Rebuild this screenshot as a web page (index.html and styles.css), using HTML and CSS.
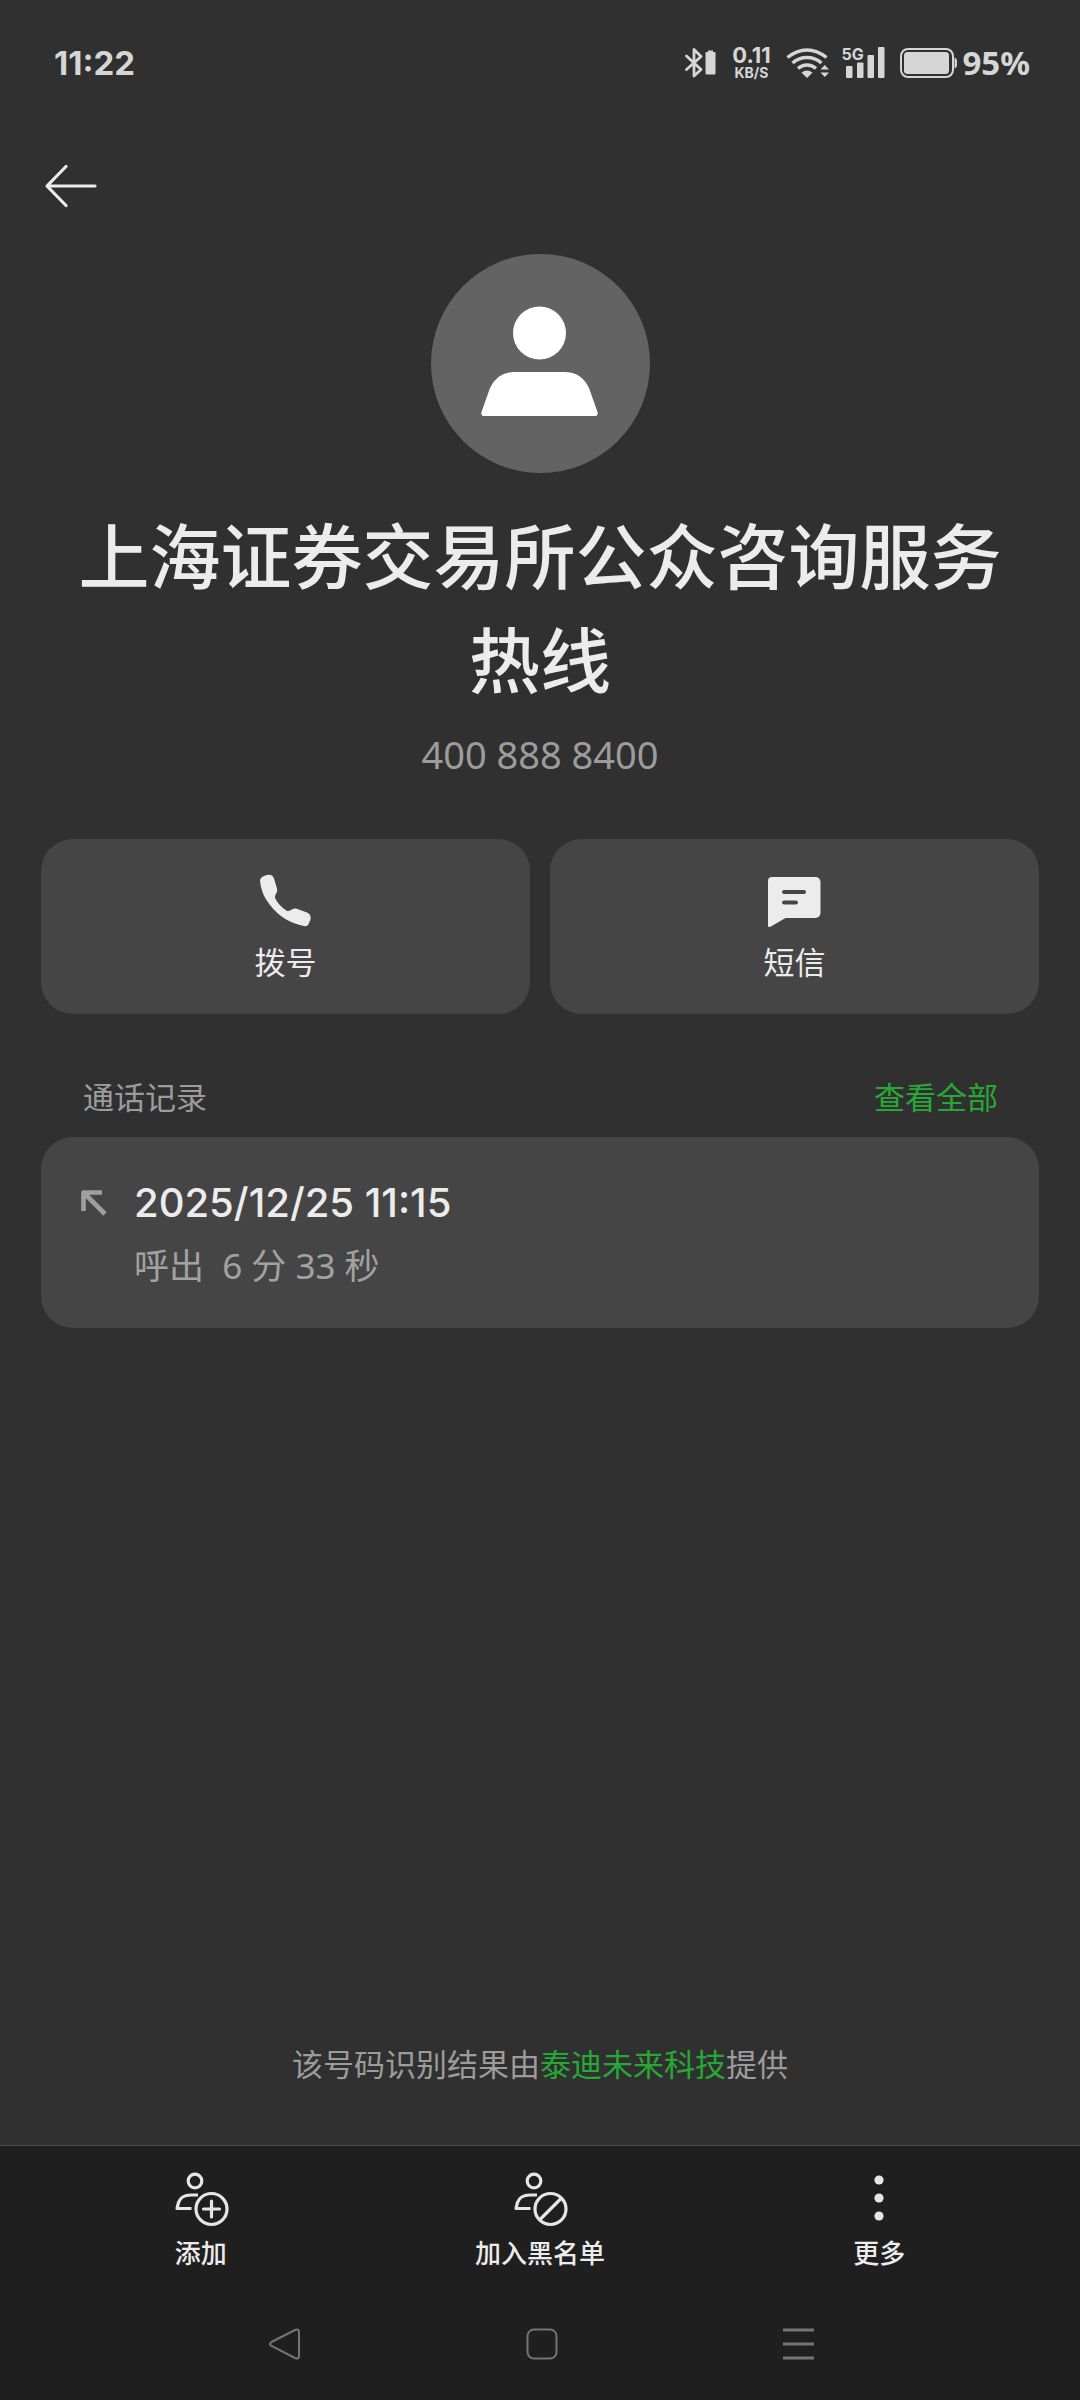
FILE: index.html
```html
<!DOCTYPE html>
<html lang="zh-CN">
<head>
<meta charset="utf-8">
<meta name="viewport" content="width=device-width, initial-scale=1">
<title>上海证券交易所公众咨询服务热线</title>
<link rel="stylesheet" href="styles.css">
</head>
<body>
<div class="status">
  <time class="clock">11:22</time>
  <div class="indicators">
    <svg width="32" height="32" viewBox="0 0 32 32" aria-hidden="true">
      <path d="M1.5 9 16 22.500 9 29V2.500L16 9.500 1.500 22.500" fill="none" stroke="#d6d6d6" stroke-width="2.800" stroke-linejoin="round" stroke-linecap="round"/>
      <path d="M23 3.500h5V5h1.500a1 1 0 0 1 1 1v20a1.500 1.500 0 0 1-1.500 1.500h-7a1.500 1.500 0 0 1-1.500-1.500V6a1 1 0 0 1 1-1H23z" fill="#d6d6d6"/>
    </svg>
    <div class="speed"><span class="rate">0.11</span><span class="unit">KB/S</span></div>
    <svg width="44" height="32" viewBox="0 0 44 32" aria-hidden="true">
      <g fill="none" stroke="#d6d6d6" stroke-width="3.400">
        <path d="M1.500 10.500Q11 3 21 3t19.500 7.500"/>
        <path d="M6.500 16Q13 10.500 21 10.500T35.500 16"/>
        <path d="M12 21.500q4-3.500 9-3.500t9 3.500"/>
      </g>
      <path d="M15.500 25.500q5.500-4 11 0L21 31zM34.500 22.500h8.500l-4.200-4.500zM34.500 25.500h8.500l-4.200 4.500z" fill="#d6d6d6"/>
    </svg>
    <div class="signal">
      <span class="network">5G</span>
      <svg width="40" height="32" viewBox="0 0 40 32" aria-hidden="true">
        <g fill="#d6d6d6"><rect y="19" width="6.500" height="12" rx="1"/><rect x="11" y="15.500" width="6.500" height="15.500" rx="1"/><rect x="21.500" y="8" width="6.500" height="23" rx="1"/><rect x="32" width="6.500" height="31" rx="1"/></g>
      </svg>
    </div>
    <svg width="58" height="32" viewBox="0 0 58 32" aria-hidden="true">
      <rect x="1" y="2" width="52" height="28" rx="7" fill="none" stroke="#d6d6d6" stroke-width="2"/>
      <rect x="4" y="5" width="45" height="22" rx="3.500" fill="#d6d6d6"/>
      <path d="M54.500 10.500q2.500 1 2.500 3v5q0 2-2.500 3z" fill="#d6d6d6"/>
    </svg>
    <span class="percent">95%</span>
  </div>
</div>

<header class="topbar">
  <button class="back" type="button" aria-label="返回">
    <svg width="54" height="46" viewBox="0 0 54 46" aria-hidden="true"><path d="M22 3.500 3 23l19 19.500M3 23h48" fill="none" stroke="#ececec" stroke-width="3.200" stroke-linecap="round" stroke-linejoin="round"/></svg>
  </button>
</header>

<main class="content">
  <section class="profile">
    <div class="avatar">
      <svg width="120" height="120" viewBox="0 -4 120 120" aria-hidden="true"><circle cx="59.500" cy="25" r="26.500" fill="#fff"/><path d="M34.500 64h50q17 0 24.500 16l8.500 24q1 4-3 4H4.500q-4 0-3-4l8.500-24Q17.500 64 34.500 64z" fill="#fff"/></svg>
    </div>
    <h1 class="name">上海证券交易所公众咨询服务热线</h1>
    <p class="number">400 888 8400</p>
  </section>

  <div class="actions">
    <button class="action" type="button">
      <svg width="54" height="54" viewBox="0 0 54 54" aria-hidden="true"><path d="M1 8Q1 5 4 3.500L7.500 2q6-1.500 7.500 3.500l3 10q1 3-1 5.500-1.500 1.500-1 4Q20 33 28 38q3 0 4-1 2-2 5-1.500l11 4q4.500 2 3.500 7l-1.500 3.500Q48.500 54 45 53 24 49 11 32 2 21 1 8z" fill="#ececec"/></svg>
      <span>拨号</span>
    </button>
    <button class="action" type="button">
      <svg width="54" height="54" viewBox="0 0 54 54" aria-hidden="true"><path d="M4 4h43.500a5 5 0 0 1 5 5v31a5 5 0 0 1-5 5h-30L2 54Q0 54.500 0 52.500V8a4 4 0 0 1 4-4z" fill="#ececec"/><path d="M16 19h20M16 29.500h12" stroke="#454545" stroke-width="4" stroke-linecap="round"/></svg>
      <span>短信</span>
    </button>
  </div>

  <section class="history">
    <div class="history-head">
      <h2 class="history-title">通话记录</h2>
      <a class="link" href="#all">查看全部</a>
    </div>
    <div class="card">
      <svg class="outgoing" width="28" height="28" viewBox="0 0 28 28" aria-hidden="true"><path d="M23 3.500H4.500V22M5 4l21 21" fill="none" stroke="#9f9f9f" stroke-width="4.600" stroke-linejoin="round"/></svg>
      <div class="call">
        <time class="call-time">2025/12/25 11:15</time>
        <span class="call-info">呼出&nbsp; 6 分 33 秒</span>
      </div>
    </div>
  </section>

  <p class="source">该号码识别结果由<a class="link" href="#provider">泰迪未来科技</a>提供</p>
</main>

<footer class="bottom">
  <div class="toolbar">
    <button class="tool" type="button">
      <svg width="56" height="56" viewBox="0 0 56 56" aria-hidden="true"><g fill="none" stroke="#e6e6e6" stroke-width="3.200"><circle cx="22" cy="9" r="6.800"/><path d="M25 23H18Q8 23 5.500 30.500L4 36.500H18.500" stroke-linejoin="round"/><circle cx="38.500" cy="37" r="15.500"/><path d="M30.500 37h16M38.500 29v16" stroke-linecap="round"/></g></svg>
      <span>添加</span>
    </button>
    <button class="tool" type="button">
      <svg width="56" height="56" viewBox="0 0 56 56" aria-hidden="true"><g fill="none" stroke="#e6e6e6" stroke-width="3.200"><circle cx="22" cy="9" r="6.800"/><path d="M25 23H18Q8 23 5.500 30.500L4 36.500H18.500" stroke-linejoin="round"/><circle cx="38.500" cy="37" r="15.500"/><path d="M27.500 48l22-22"/></g></svg>
      <span>加入黑名单</span>
    </button>
    <button class="tool" type="button">
      <svg width="56" height="56" viewBox="0 0 56 56" aria-hidden="true"><g fill="#e6e6e6"><circle cx="28" cy="8" r="4.600"/><circle cx="28" cy="26" r="4.600"/><circle cx="28" cy="44" r="4.600"/></g></svg>
      <span>更多</span>
    </button>
  </div>
  <nav class="sysnav" aria-label="系统导航">
    <button class="key" type="button" aria-label="返回"><svg width="32" height="32" viewBox="0 0 32 32" aria-hidden="true"><path d="M2.500 14 26 2q4-1.500 4 2v24q0 3.500-4 2L2.500 18q-3-2 0-4z" fill="none" stroke="#757575" stroke-width="2"/></svg></button>
    <button class="key" type="button" aria-label="主屏幕"><svg width="32" height="32" viewBox="0 0 32 32" aria-hidden="true"><rect x="1.500" y="1.500" width="29" height="29" rx="6.500" fill="none" stroke="#757575" stroke-width="2"/></svg></button>
    <button class="key" type="button" aria-label="最近任务"><svg width="32" height="32" viewBox="0 0 32 32" aria-hidden="true"><path d="M0 2h31M0 16h31M0 30h31" stroke="#757575" stroke-width="2.800"/></svg></button>
  </nav>
</footer>
</body>
</html>
```

FILE: styles.css
```css
* {
  box-sizing: border-box;
}

body {
  display: flex;
  flex-direction: column;
  min-height: 100vh;
  margin: 0;
  background: #303030;
  color: #ececec;
  font-family: "Noto Sans", "Noto Sans CJK SC", sans-serif;
}

h1, h2, p {
  margin: 0;
  font-weight: 400;
}

button {
  margin: 0;
  padding: 0;
  border: 0;
  background: none;
  color: inherit;
  font: inherit;
  cursor: pointer;
}

svg {
  display: block;
  flex: none;
}

.link {
  color: #27a835;
  text-decoration: none;
}

/* Status bar */
.status {
  display: flex;
  justify-content: space-between;
  align-items: center;
  height: 126px;
  padding: 0 50px 0 54px;
  color: #d6d6d6;
  font-family: Inter, sans-serif;
  font-weight: 700;
}

.clock,
.percent {
  font-size: 33px;
  line-height: 40px;
}

.percent {
  margin-left: 4px;
  font-family: "Noto Sans", sans-serif;
}

.indicators {
  display: flex;
  align-items: center;
}

.speed {
  display: flex;
  flex-direction: column;
  align-items: center;
  width: 38px;
  margin: 0 16px 0 15px;
}

.rate {
  font-size: 22px;
  line-height: 20px;
}

.unit {
  font-size: 14px;
  line-height: 16px;
}

.signal {
  position: relative;
  margin: 0 14px 0 16px;
}

.network {
  position: absolute;
  top: 0;
  left: -5px;
  font-size: 16px;
  line-height: 14px;
}

/* Header */
.topbar {
  display: flex;
  align-items: center;
  height: 120px;
  padding: 0 44px;
}

.back {
  display: flex;
}

/* Contact */
.content {
  display: flex;
  flex-direction: column;
  flex: 1;
  padding: 8px 41px 0;
}

.profile {
  display: flex;
  flex-direction: column;
  align-items: center;
  padding: 0 34px;
  text-align: center;
}

.avatar {
  display: flex;
  justify-content: center;
  align-items: center;
  width: 219px;
  height: 219px;
  border-radius: 50%;
  background: #636363;
}

.name {
  margin-top: 31px;
  font-size: 71px;
  font-weight: 500;
  line-height: 104px;
}

.number {
  margin-top: 16px;
  color: #9c9c9c;
  font-size: 38px;
  line-height: 52px;
}

.actions {
  display: grid;
  grid-template-columns: 1fr 1fr;
  gap: 20px;
  margin-top: 59px;
}

.action {
  display: flex;
  flex-direction: column;
  align-items: center;
  gap: 12px;
  padding: 34px 0 29px;
  border-radius: 32px;
  background: #454545;
  font-size: 31px;
  line-height: 46px;
}

/* Call history */
.history {
  margin-top: 60px;
}

.history-head {
  display: flex;
  justify-content: space-between;
  padding: 0 41px 17px 42px;
  font-size: 31px;
  line-height: 46px;
}

.history-title {
  color: #9c9c9c;
  font-size: 31px;
}

.card {
  display: flex;
  gap: 27px;
  padding: 36px 38px 35px;
  border-radius: 32px;
  background: #454545;
}

.outgoing {
  margin-top: 16px;
}

.call {
  display: flex;
  flex-direction: column;
  gap: 6px;
}

.call-time {
  font-family: Inter, sans-serif;
  font-size: 40px;
  font-weight: 500;
  line-height: 60px;
}

.call-info {
  color: #a2a2a2;
  font-size: 35px;
  line-height: 54px;
}

.source {
  margin-top: auto;
  padding: 40px 0 58px;
  color: #9c9c9c;
  font-size: 31px;
  line-height: 46px;
  text-align: center;
}

/* Bottom bars */
.bottom {
  border-top: 1px solid #505050;
  background: #1f1f1f;
}

.toolbar {
  display: grid;
  grid-template-columns: repeat(3, 1fr);
  padding: 26px 31px 20px;
}

.tool {
  display: flex;
  flex-direction: column;
  align-items: center;
  gap: 6px;
  font-size: 26px;
  font-weight: 500;
  line-height: 38px;
}

.sysnav {
  display: grid;
  grid-template-columns: repeat(3, 1fr);
  padding: 36px 152px 40px 156px;
}

.key {
  display: flex;
  justify-content: center;
}
```
